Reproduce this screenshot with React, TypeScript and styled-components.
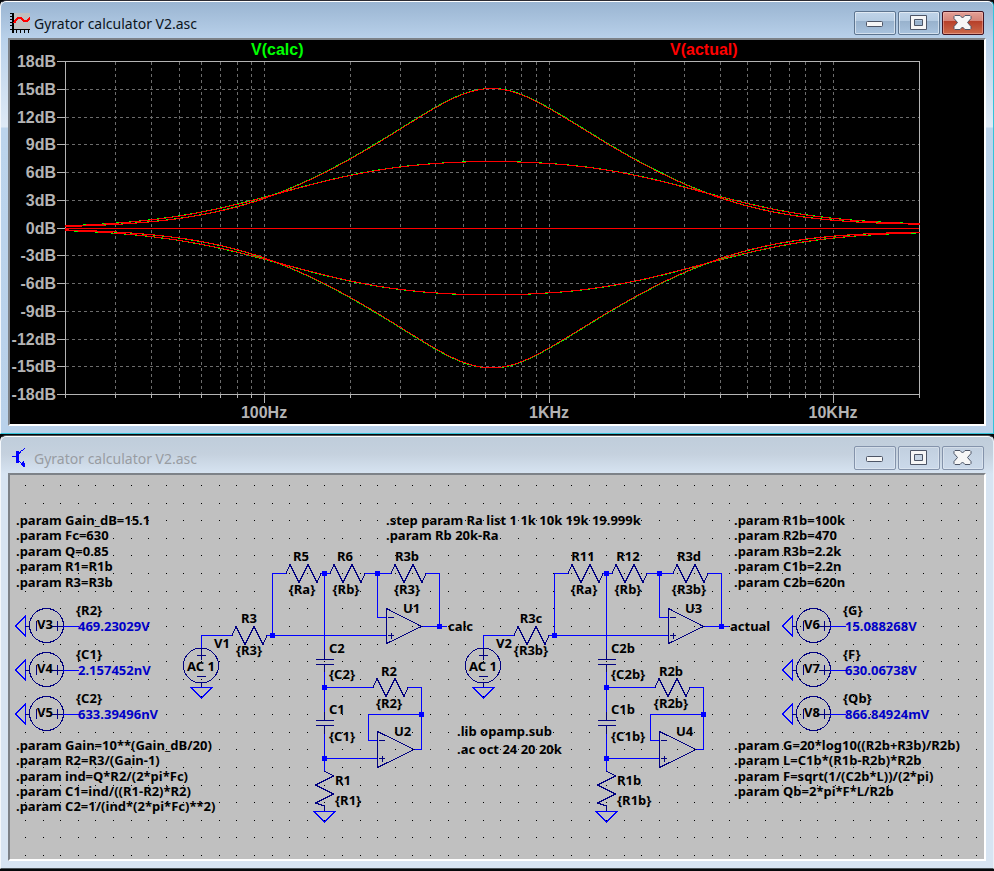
import React from "react";
import styled, { createGlobalStyle, css } from "styled-components";

const GlobalStyle = createGlobalStyle`
  * { box-sizing: border-box; }
  body { margin: 0; background: #05080a; }
`;

/* ---------- window chrome ---------- */

const Desktop = styled.main`
  display: flex;
  flex-direction: column;
  gap: 1px;
  padding-bottom: 2px;
`;

const WindowFrame = styled.section<{ $active?: boolean }>`
  border: 1px solid #33c4da;
  border-top-color: #2b2b33;
  border-left-color: #f4f8fc;
  border-radius: 6px 6px 0 0;
  padding: 0 7px 7px;
  box-shadow: inset 0 1px 0 #ffffff;
  ${(p) =>
    p.$active
      ? css`
          background: linear-gradient(#99b4d1 0, #b9d1ea 38px, #dfeaf6 126px, #bcd4ec 127px, #b9d1ea 100%);
        `
      : css`
          border-top-color: #4a4d52;
          border-right-color: #e8f0f8;
          border-bottom-color: #4b5358;
          background: linear-gradient(#bfcddb 0, #c5d1de 18px, #d7e4f2 38px, #d7e4f2 100%);
        `}
`;

const TitleBar = styled.header`
  display: flex;
  align-items: flex-start;
  gap: 2px;
  height: 37px;
  padding: 10px 2px 0;
`;

const AppIcon = styled.svg`
  flex: none;
  width: 20px;
  height: 24px;
`;

const Title = styled.h1<{ $active?: boolean }>`
  flex: 1;
  margin: 0 0 0 2px;
  font: 400 14px/26px "Noto Sans", "Open Sans", sans-serif;
  color: ${(p) => (p.$active ? "#0c1420" : "#989ca2")};
`;

const CaptionButton = styled.button<{ $tone: "blue" | "red" | "idle" }>`
  flex: none;
  width: 42px;
  height: 24px;
  padding: 0;
  border-radius: 2px;
  border: 1px solid #5d7590;
  box-shadow: inset 0 0 0 1px rgba(255, 255, 255, 0.5);
  ${(p) =>
    p.$tone === "blue" &&
    css`
      background: linear-gradient(#c0d4e8 0, #b4cbe2 42%, #98b2cd 43%, #a9c3de 100%);
    `}
  ${(p) =>
    p.$tone === "red" &&
    css`
      border-color: #431422;
      box-shadow: inset 0 0 0 1px rgba(255, 200, 190, 0.45);
      background: linear-gradient(#e3a096 0, #d48377 42%, #b7402a 43%, #cb6a4b 100%);
    `}
  ${(p) =>
    p.$tone === "idle" &&
    css`
      border-color: #8493ab;
      box-shadow: inset 0 0 0 1px rgba(255, 255, 255, 0.3);
      background: linear-gradient(#c1cfdf, #cbd9ea);
    `}
  svg {
    display: block;
    width: 100%;
    height: 100%;
  }
`;

const Client = styled.div<{ $paper: string }>`
  border: 2px solid #ffffff;
  border-top-color: #7d8288;
  border-left-color: #7d8288;
  background: ${(p) => p.$paper};
`;

const Drawing = styled.svg`
  display: block;
  width: 100%;
  height: auto;
`;

const PlotText = styled.text`
  font: 700 16px "Liberation Sans", Arial, sans-serif;
`;

const NetText = styled.text`
  font: 700 13px "Noto Sans", "Open Sans", sans-serif;
  white-space: pre;
`;

function MinimizeGlyph() {
  return (
    <svg viewBox="0 0 40 22" aria-hidden="true">
      <rect x="11.5" y="9.5" width="16" height="5" rx="1" fill="#f6f6f6" stroke="#4d5566" />
    </svg>
  );
}

function MaximizeGlyph() {
  return (
    <svg viewBox="0 0 40 22" aria-hidden="true">
      <path
        d="M11.500 3.500h16v14h-16zM15.500 7.500v6h8v-6z"
        fill="#f6f6f6"
        fillRule="evenodd"
        stroke="#4d5566"
        strokeLinejoin="round"
      />
    </svg>
  );
}

function CloseGlyph() {
  return (
    <svg viewBox="0 0 40 22" aria-hidden="true">
      <path
        d="M12 3.500h5l2.500 2.500 2.500-2.500h5l1 1v2l-3.500 4 3.500 4v2l-1 1h-5l-2.500-2.500-2.500 2.500h-5l-1-1v-2l3.500-4-3.500-4v-2z"
        fill="#f6f6f6"
        stroke="#4d5566"
        strokeLinejoin="round"
      />
    </svg>
  );
}

function WaveIcon() {
  return (
    <AppIcon viewBox="0 0 20 24" shapeRendering="crispEdges" aria-hidden="true">
      <path d="M3 2h17v16H3z" fill="#c0c0c0" />
      <path
        d="M2 2h2v20H2zM0 2h2v1H0zM0 5h2v1H0zM0 8h2v1H0zM0 11h2v1H0zM0 14h2v1H0zM0 18h20v1H0zM6 19h1v3H6zM10 19h1v3h-1zM14 19h1v3h-1zM18 19h1v3h-1z"
        fill="#000"
      />
      <path d="M4 12l2-3 2-2h3l3 3h3l3-3" fill="none" stroke="#f00" strokeWidth="2" />
    </AppIcon>
  );
}

function TransistorIcon() {
  return (
    <AppIcon viewBox="0 0 20 24" shapeRendering="crispEdges" aria-hidden="true">
      <path d="M6 5h3v12H6zM2 10h4v1H2z" fill="#00f" />
      <path d="M9 8l2-3 2-1 2-2M8 14l6 6" fill="none" stroke="#00f" />
      <path d="M15 21h-2l-3-3 4-3 1 3z" fill="#00f" />
    </AppIcon>
  );
}

function AppWindow(props: {
  active?: boolean;
  icon: React.ReactNode;
  title: string;
  paper: string;
  children: React.ReactNode;
}) {
  const tone = props.active ? "blue" : "idle";
  return (
    <WindowFrame $active={props.active}>
      <TitleBar>
        {props.icon}
        <Title $active={props.active}>{props.title}</Title>
        <CaptionButton $tone={tone} aria-label="Minimize">
          <MinimizeGlyph />
        </CaptionButton>
        <CaptionButton $tone={tone} aria-label="Maximize">
          <MaximizeGlyph />
        </CaptionButton>
        <CaptionButton $tone={props.active ? "red" : "idle"} aria-label="Close">
          <CloseGlyph />
        </CaptionButton>
      </TitleBar>
      <Client $paper={props.paper}>{props.children}</Client>
    </WindowFrame>
  );
}

/* ---------- frequency response plot ---------- */

const LEFT = 65;
const RIGHT = 919;
const TOP = 61;
const BOTTOM = 394;
const DECADE = 284.4;
const PX_PER_DB = 9.25;

const xOf = (hz: number) => Math.round(66 + DECADE * Math.log10(hz / 20) - 0.6);
const yOf = (db: number) => Math.round(227.7 - PX_PER_DB * db);

/* Peaking response, in dB, of a gyrator stage centred on 630 Hz. */
function response(hz: number, gain: number, width: number) {
  const u = hz / 630 - 630 / hz;
  const peaking = 10 * Math.log10((u * u + gain * gain * width * width) / (u * u + width * width));
  const treble = 0.25 * Math.sqrt(Math.max(0, hz - 1000) / 19000);
  return peaking + treble;
}

function trace(peakDb: number, width: number, sign: number, calc: boolean) {
  const gain = Math.pow(10, peakDb / 20);
  const at = (x: number) => {
    const hz = 20 * Math.pow(10, (x - LEFT) / DECADE);
    return response(hz, gain, width);
  };
  let d = "";
  let start = LEFT;
  let level = NaN;
  for (let x = LEFT; x <= RIGHT + 1; x++) {
    const slope = Math.abs(at(x + 1) - at(x)) * PX_PER_DB;
    const db = at(x) + (calc ? (0.1 + slope * 0.9) / PX_PER_DB : 0);
    const y = x > RIGHT ? NaN : yOf(sign * db);
    if (y !== level) {
      if (!Number.isNaN(level)) d += `M${start} ${level + 0.5}h${x - start}`;
      start = x;
      level = y;
    }
  }
  return d;
}

const curves = [
  { peak: 15.09, width: 1.17, sign: 1 },
  { peak: 7.2, width: 3.75, sign: 1 },
  { peak: 7.2, width: 3.75, sign: -1 },
  { peak: 15.09, width: 1.17, sign: -1 },
];

const minorHz = [30, 40, 50, 60, 70, 80, 90, 100, 200, 300, 400, 500, 600, 700, 800, 900, 1000, 2000, 3000, 4000, 5000, 6000, 7000, 8000, 9000, 10000];
const majorHz = [
  { hz: 100, label: "100Hz" },
  { hz: 1000, label: "1KHz" },
  { hz: 10000, label: "10KHz" },
];
const levels = [18, 15, 12, 9, 6, 3, 0, -3, -6, -9, -12, -15, -18];

function Plot() {
  const lineY = (db: number) => Math.round(TOP + ((18 - db) * 333) / 36);
  return (
    <Drawing viewBox="10 40 974 384" role="img" aria-label="Gain against frequency">
      <g shapeRendering="crispEdges" fill="none">
        <g stroke="#6c6c6c" strokeDasharray="3 3">
          {minorHz.map((hz) => (
            <path key={hz} d={`M${xOf(hz) + 0.5} ${TOP + 1}V${BOTTOM}`} />
          ))}
          {levels.slice(1, -1).map((db) => (
            <path key={db} d={`M${LEFT + 1} ${lineY(db) + 0.5}H${RIGHT}`} />
          ))}
        </g>
        <g stroke="#b4b4b4">
          <path d={`M${LEFT}.5 ${TOP}.5H${RIGHT}.5V${BOTTOM}.5H${LEFT}.5z`} />
          {levels.map((db) => (
            <path key={db} d={`M57 ${lineY(db) + 0.5}H${LEFT}`} />
          ))}
          {[LEFT, RIGHT, ...minorHz.map(xOf)].map((x) => (
            <path key={x} d={`M${x + 0.5} ${BOTTOM}v4`} />
          ))}
          {majorHz.map(({ hz }) => (
            <path key={hz} d={`M${xOf(hz) + 0.5} ${BOTTOM}v9`} />
          ))}
        </g>
        <g stroke="#00ff00">
          {curves.map((c) => (
            <path key={c.peak * c.sign} d={trace(c.peak, c.width, c.sign, true)} />
          ))}
        </g>
        <g stroke="#ff0000">
          <path d={`M${LEFT} 228.5H${RIGHT}`} />
          {curves.map((c) => (
            <path key={c.peak * c.sign} d={trace(c.peak, c.width, c.sign, false)} />
          ))}
        </g>
      </g>
      <g fill="#b4b4b4">
        {levels.map((db) => (
          <PlotText key={db} x="56" y={lineY(db) + 6} textAnchor="end">
            {db}dB
          </PlotText>
        ))}
        {majorHz.map(({ hz, label }) => (
          <PlotText key={hz} x={xOf(hz)} y="418" textAnchor="middle">
            {label}
          </PlotText>
        ))}
      </g>
      <PlotText x="251" y="55" fill="#00ff00">
        V(calc)
      </PlotText>
      <PlotText x="670" y="55" fill="#ff0000">
        V(actual)
      </PlotText>
    </Drawing>
  );
}

/* ---------- schematic ---------- */

const WIRE = "#0000ff";
const PART = "#000080";

type Label = [x: number, y: number, text: string];

function Labels({ items, anchor, color = "#000" }: { items: Label[]; anchor?: "middle"; color?: string }) {
  return (
    <g fill={color}>
      {items.map(([x, y, text]) => (
        <NetText key={`${x}-${y}`} x={x} y={y} textAnchor={anchor}>
          {text}
        </NetText>
      ))}
    </g>
  );
}

const resistor = (x: number, y: number) => `M${x} ${y}l4-9 9 18 9-18 9 18 4-9`;

function Stage({ dx }: { dx: number }) {
  return (
    <g transform={`translate(${dx} 0)`} fill="none" shapeRendering="crispEdges">
      <path
        stroke={WIRE}
        d="M201.5 648V635.500H232M267 635.500H386.500M272.500 635.500V573.500H286M321 573.500H330M365 573.500H391M377.500 573.500V617.500H386.500M426 573.500H439.500V626.500M422 626.500H447M324.500 573.500V650M324.500 672V713M324.500 687.500H373M408 687.500H421.500V749.500H414M421.500 714.500H368.500V740.500H377.500M324.500 732V771M324.500 758.500H377.500M191 687.500H212L201.500 698zM314 811.500H335L324.500 822z"
      />
      <g stroke={PART}>
        <path d={[resistor(232, 635.5), resistor(286, 573.5), resistor(330, 573.5), resistor(391, 573.5), resistor(373, 687.5)].join("")} />
        <path d="M324.500 771l9 5-18 9 18 9-18 9 9 3V811" />
        <path d="M386.500 608.500V643.500L421.500 626.500zM377.500 731.500V767.500L414 749.500z" />
        <circle cx="201" cy="665.5" r="17.500" />
        <path
          d="M201.500 648V660M197 655.500H206M197 676.500H206M201.500 683V687M388 617.500H394M388 635.500H394M391.500 633V639M379 740.500H385M379 758.500H385M382.500 756V762M324.500 650V659M316 659.500H334M316 664.500H334M324.500 664V672M324.500 712V720M316 720.500H334M316 725.500H334M324.500 725V734"
        />
      </g>
      <path
        fill={WIRE}
        d="M322 571h5v5h-5zM375 571h5v5h-5zM270 633h5v5h-5zM437 624h5v5h-5zM322 685h5v5h-5zM419 712h5v5h-5zM322 756h5v5h-5z"
      />
    </g>
  );
}

function Source({ x, y }: { x: number; y: number }) {
  return (
    <g transform={`translate(${x} ${y})`} fill="none" shapeRendering="crispEdges">
      <path d="M10.500-10V10L.5 0z" stroke={WIRE} />
      <circle cx="31.500" cy="-.5" r="17" stroke={PART} />
      <path d="M10 .5H14M21.500-5V5M42.500-5V5M37 .5H50" stroke={PART} />
      <path d="M48 .5H64" stroke={WIRE} />
    </g>
  );
}

const gridDots = (() => {
  let d = "";
  for (let j = 0; j < 22; j++)
    for (let i = 0; i < 55; i++) d += `M${25 + Math.round(i * 17.61)} ${485 + Math.round(j * 17.62)}h1v1h-1z`;
  return d;
})();

const directives: Label[] = [
  [16, 525, ".param Gain_dB=15.1"],
  [16, 540, ".param Fc=630"],
  [16, 556, ".param Q=0.85"],
  [16, 571, ".param R1=R1b"],
  [16, 587, ".param R3=R3b"],
  [386, 525, ".step param Ra list 1 1k 10k 19k 19.999k"],
  [386, 540, ".param Rb 20k-Ra"],
  [734, 525, ".param R1b=100k"],
  [734, 540, ".param R2b=470"],
  [734, 556, ".param R3b=2.2k"],
  [734, 571, ".param C1b=2.2n"],
  [734, 587, ".param C2b=620n"],
  [16, 750, ".param Gain=10**(Gain_dB/20)"],
  [16, 765, ".param R2=R3/(Gain-1)"],
  [16, 781, ".param ind=Q*R2/(2*pi*Fc)"],
  [16, 796, ".param C1=ind/((R1-R2)*R2)"],
  [16, 811, ".param C2=1/(ind*(2*pi*Fc)**2)"],
  [457, 736, ".lib opamp.sub"],
  [457, 754, ".ac oct 24 20 20k"],
  [734, 750, ".param G=20*log10((R2b+R3b)/R2b)"],
  [734, 765, ".param L=C1b*(R1b-R2b)*R2b"],
  [734, 781, ".param F=sqrt(1/(C2b*L))/(2*pi)"],
  [734, 796, ".param Qb=2*pi*F*L/R2b"],
];

const centredNames: Label[] = [
  [301, 561, "R5"],
  [345, 561, "R6"],
  [407, 561, "R3b"],
  [302, 594, "{Ra}"],
  [346, 594, "{Rb}"],
  [407, 594, "{R3}"],
  [249, 623, "R3"],
  [249, 655, "{R3}"],
  [389, 676, "R2"],
  [389, 708, "{R2}"],
  [201, 671, "AC 1"],
  [583, 561, "R11"],
  [628, 561, "R12"],
  [689, 561, "R3d"],
  [584, 594, "{Ra}"],
  [628, 594, "{Rb}"],
  [689, 594, "{R3b}"],
  [531, 623, "R3c"],
  [531, 655, "{R3b}"],
  [671, 676, "R2b"],
  [671, 708, "{R2b}"],
  [483, 671, "AC 1"],
];

const sideNames: Label[] = [
  [214, 648, "V1"],
  [403, 613, "U1"],
  [448, 631, "calc"],
  [329, 653, "C2"],
  [329, 679, "{C2}"],
  [329, 714, "C1"],
  [329, 741, "{C1}"],
  [394, 736, "U2"],
  [335, 785, "R1"],
  [335, 805, "{R1}"],
  [496, 648, "V2"],
  [685, 613, "U3"],
  [730, 631, "actual"],
  [611, 653, "C2b"],
  [611, 679, "{C2b}"],
  [611, 714, "C1b"],
  [611, 741, "{C1b}"],
  [676, 736, "U4"],
  [617, 785, "R1b"],
  [617, 805, "{R1b}"],
];

const monitors = [
  { x: 15, y: 626, name: "V3", param: "{R2}", value: "469.23029V" },
  { x: 15, y: 670, name: "V4", param: "{C1}", value: "2.157452nV" },
  { x: 15, y: 714, name: "V5", param: "{C2}", value: "633.39496nV" },
  { x: 782, y: 626, name: "V6", param: "{G}", value: "15.088268V" },
  { x: 782, y: 670, name: "V7", param: "{F}", value: "630.06738V" },
  { x: 782, y: 714, name: "V8", param: "{Qb}", value: "866.84924mV" },
];

function Schematic() {
  return (
    <Drawing viewBox="10 475 974 384" role="img" aria-label="Gyrator circuit">
      <path d={gridDots} fill="#000" shapeRendering="crispEdges" />
      <Stage dx={0} />
      <Stage dx={282} />
      {monitors.map((m) => (
        <Source key={m.name} x={m.x} y={m.y} />
      ))}
      <Labels items={directives} />
      <Labels items={centredNames} anchor="middle" />
      <Labels items={sideNames} />
      <Labels items={monitors.map((m): Label => [m.x + 22, m.y + 3, m.name])} />
      <Labels items={monitors.map((m): Label => [m.x + 61, m.y - 11, m.param])} />
      <Labels items={monitors.map((m): Label => [m.x + 63, m.y + 5, m.value])} color="#0000c8" />
    </Drawing>
  );
}

export default function App() {
  return (
    <>
      <GlobalStyle />
      <Desktop>
        <AppWindow active icon={<WaveIcon />} title="Gyrator calculator V2.asc" paper="#000000">
          <Plot />
        </AppWindow>
        <AppWindow icon={<TransistorIcon />} title="Gyrator calculator V2.asc" paper="#c0c0c0">
          <Schematic />
        </AppWindow>
      </Desktop>
    </>
  );
}
